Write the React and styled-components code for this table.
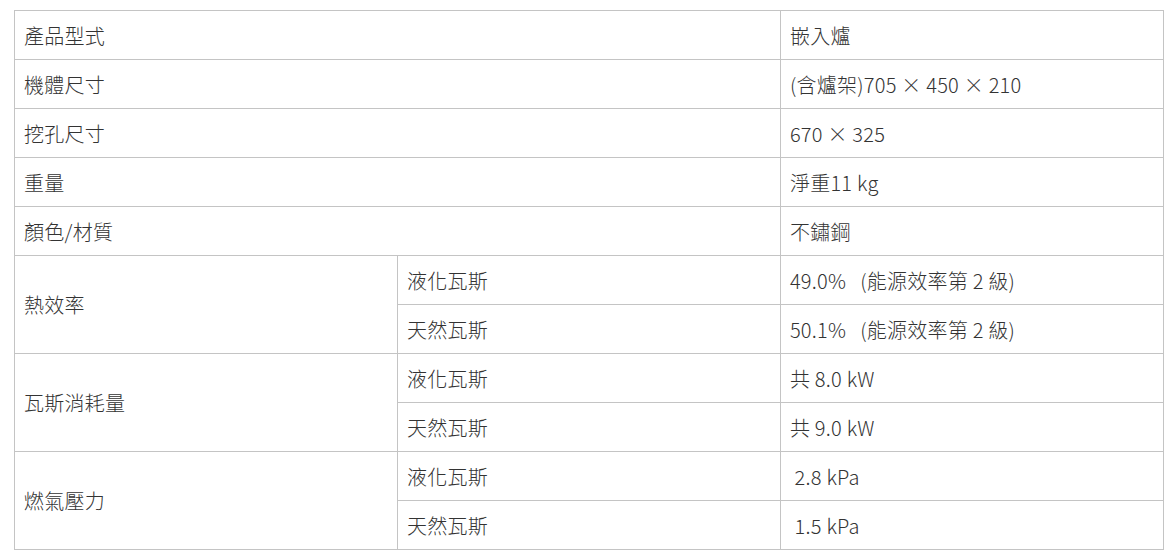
import styled, { createGlobalStyle } from "styled-components";

const GlobalStyle = createGlobalStyle`
  body {
    margin: 0;
    background: #fff;
    font-family: "Noto Sans CJK TC", "Noto Sans", sans-serif;
  }
`;

const Wrapper = styled.div`
  padding: 10px 10px 0 14px;
`;

const SpecTable = styled.table`
  width: 1150px;
  border-collapse: collapse;
  table-layout: fixed;
  color: #333;
  font-size: 20px;
  font-weight: 300;
`;

const Cell = styled.td`
  border: 1px solid #c4c4c4;
  height: 49px;
  padding: 1px 9px 0;
  box-sizing: border-box;
  line-height: 26px;
  vertical-align: middle;
  white-space: pre;
  letter-spacing: 0.25px;
`;

const specs = [
  { label: "產品型式", value: "嵌入爐" },
  { label: "機體尺寸", value: "(含爐架)705 × 450 × 210" },
  { label: "挖孔尺寸", value: "670 × 325" },
  { label: "重量", value: "淨重11 kg" },
  { label: "顏色/材質", value: "不鏽鋼" },
];

const gasSpecs = [
  { label: "熱效率", lpg: "49.0%   (能源效率第 2 級)", ng: "50.1%   (能源效率第 2 級)" },
  { label: "瓦斯消耗量", lpg: "共 8.0 kW", ng: "共 9.0 kW" },
  { label: "燃氣壓力", lpg: " 2.8 kPa", ng: " 1.5 kPa" },
];

const App = () => {
  return (
    <Wrapper>
      <GlobalStyle />
      <SpecTable>
        <colgroup>
          <col style={{ width: "33.33%" }} />
          <col style={{ width: "33.33%" }} />
          <col style={{ width: "33.34%" }} />
        </colgroup>
        <tbody>
          {specs.map((s) => (
            <tr key={s.label}>
              <Cell colSpan={2}>{s.label}</Cell>
              <Cell>{s.value}</Cell>
            </tr>
          ))}
          {gasSpecs.map((g) => [
            <tr key={g.label + "-lpg"}>
              <Cell rowSpan={2}>{g.label}</Cell>
              <Cell>液化瓦斯</Cell>
              <Cell>{g.lpg}</Cell>
            </tr>,
            <tr key={g.label + "-ng"}>
              <Cell>天然瓦斯</Cell>
              <Cell>{g.ng}</Cell>
            </tr>,
          ])}
        </tbody>
      </SpecTable>
    </Wrapper>
  );
};

export default App;
